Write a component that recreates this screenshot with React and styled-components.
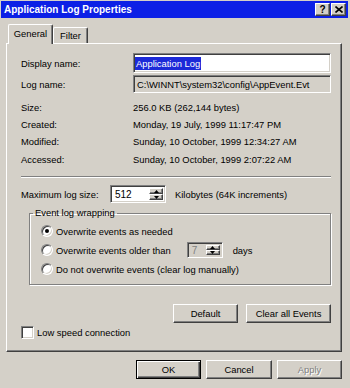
import React from 'react';
import styled, { createGlobalStyle, css } from 'styled-components';

const FACE = '#d4d0c8';
const SHADOW = '#808080';
const DARK = '#404040';

const Global = createGlobalStyle`
  html, body { margin: 0; padding: 0; background: ${FACE}; }
  body { font-family: "Liberation Sans", Arial, sans-serif; font-size: 9.4px; color: #000; }
  * { box-sizing: border-box; }
`;

const raised = css`
  border: 1px solid;
  border-color: #fff ${DARK} ${DARK} #fff;
  box-shadow: inset -1px -1px 0 ${SHADOW};
  background: ${FACE};
`;

const sunken = css`
  border: 1px solid;
  border-color: ${SHADOW} #fff #fff ${SHADOW};
  box-shadow: inset 1px 1px 0 ${DARK}, inset -1px -1px 0 ${FACE};
`;

const Window = styled.div`
  width: 350px;
  height: 388px;
  background: ${FACE};
  padding: 1px 2px 0 1px;
  display: flex;
  flex-direction: column;
  overflow: hidden;
`;

const TitleBar = styled.div`
  height: 17px;
  background: #0c20e6;
  display: flex;
  align-items: center;
  padding: 0 2px 0 3px;
  color: #fff;
  font-weight: bold;
  font-size: 10px;
`;

const Title = styled.span`
  flex: 1;
  white-space: nowrap;
`;

const CaptionButton = styled.div`
  ${raised};
  width: 15px;
  height: 13px;
  display: flex;
  align-items: center;
  justify-content: center;
  color: #000;
  font-size: 10px;
  font-weight: bold;
  & + & { margin-left: 1px; }
`;

const Content = styled.div`
  padding: 6px 6px 0 5px;
  display: flex;
  flex-direction: column;
`;

const TabRow = styled.div`
  display: flex;
  align-items: flex-end;
  height: 19px;
  padding-left: 2px;
`;

const Tab = styled.div`
  position: relative;
  background: ${FACE};
  border: 1px solid;
  border-color: #fff ${DARK} transparent #fff;
  box-shadow: inset -1px 0 0 ${SHADOW};
  border-bottom: none;
  border-radius: 2px 2px 0 0;
  display: flex;
  align-items: center;
  justify-content: center;
  width: ${p => p.$w}px;
  height: ${p => (p.$active ? 20 : 16)}px;
  margin-bottom: ${p => (p.$active ? -1 : 0)}px;
  z-index: ${p => (p.$active ? 1 : 0)};
  padding-bottom: ${p => (p.$active ? 2 : 0)}px;
`;

const Panel = styled.div`
  width: 336px;
  height: 309px;
  border: 1px solid;
  border-color: #fff ${DARK} ${DARK} #fff;
  box-shadow: inset -1px -1px 0 ${SHADOW};
  padding: 9px 10px 0 14px;
  display: flex;
  flex-direction: column;
`;

const FieldRow = styled.div`
  display: grid;
  grid-template-columns: 112px 1fr;
  align-items: center;
  height: ${p => p.$h}px;
  margin-top: ${p => p.$mt || 0}px;
`;

const Field = styled.div`
  ${sunken};
  height: 100%;
  background: ${p => (p.$readonly ? FACE : '#fff')};
  display: flex;
  align-items: center;
  padding-left: ${p => (p.$readonly ? 3 : 1)}px;
  white-space: nowrap;
  overflow: hidden;
`;

const Selected = styled.span`
  background: #1c2ad8;
  color: #fff;
  padding: 1px 1px 1px 1px;
`;

const Separator = styled.div`
  margin-top: 8px;
  height: 2px;
  border-top: 1px solid ${SHADOW};
  border-bottom: 1px solid #fff;
`;

const MaxRow = styled.div`
  display: flex;
  align-items: center;
  height: 18px;
  margin-top: 7px;
`;

const MaxLabel = styled.span`
  width: 89px;
`;

const SpinBox = styled.div`
  ${sunken};
  width: ${p => p.$w}px;
  height: ${p => p.$h}px;
  background: ${p => (p.$disabled ? FACE : '#fff')};
  color: ${p => (p.$disabled ? SHADOW : '#000')};
  display: flex;
  align-items: stretch;
  padding: 2px;
`;

const SpinText = styled.span`
  flex: 1;
  display: flex;
  align-items: center;
  padding-left: 2px;
  font-size: 10px;
`;

const SpinCol = styled.div`
  width: 14px;
  display: flex;
  flex-direction: column;
`;

const SpinBtn = styled.div`
  ${raised};
  flex: 1;
  display: flex;
  align-items: center;
  justify-content: center;
`;

const Units = styled.span`
  margin-left: 9px;
`;

const Group = styled.fieldset`
  margin: 4px 0 0 8px;
  padding: 3px 8px 6px 11px;
  border: 1px solid ${SHADOW};
  box-shadow: 1px 1px 0 #fff, inset 1px 1px 0 #fff;
  display: flex;
  flex-direction: column;
  gap: 1px;
`;

const Legend = styled.legend`
  padding: 0 2px;
  margin-left: -8px;
  line-height: 12px;
`;

const OptionRow = styled.div`
  display: flex;
  align-items: center;
  height: 18px;
`;

const Radio = styled.span`
  ${sunken};
  width: 12px;
  height: 12px;
  border-radius: 50%;
  background: #fff;
  margin-right: 3px;
  display: flex;
  align-items: center;
  justify-content: center;
`;

const Dot = styled.span`
  width: 4px;
  height: 4px;
  border-radius: 50%;
  background: #000;
`;

const Days = styled.span`
  margin-left: 10px;
`;

const InlineSpin = styled.span`
  margin-left: 16px;
  display: flex;
`;

const ButtonRow = styled.div`
  display: flex;
  justify-content: flex-end;
  gap: ${p => p.$gap}px;
  margin-top: ${p => p.$mt}px;
`;

const Button = styled.div`
  ${raised};
  width: ${p => p.$w}px;
  height: 19px;
  display: flex;
  align-items: center;
  justify-content: center;
  color: ${p => (p.$disabled ? SHADOW : '#000')};
  text-shadow: ${p => (p.$disabled ? '1px 1px 0 #fff' : 'none')};
  ${p => p.$default && css`
    border: 1px solid #000;
    box-shadow: inset 1px 1px 0 #fff, inset -1px -1px 0 ${DARK}, inset -2px -2px 0 ${SHADOW};
  `}
`;

const CheckRow = styled.div`
  display: flex;
  align-items: center;
  height: 13px;
  margin-top: 3px;
`;

const CheckBox = styled.span`
  ${sunken};
  width: 13px;
  height: 13px;
  background: #fff;
  margin-right: 3px;
`;

const Arrow = ({ up }) => (
  <svg width="5" height="3" viewBox="0 0 5 3">
    <polygon points={up ? '2.5,0 5,3 0,3' : '0,0 5,0 2.5,3'} fill="#000" />
  </svg>
);

const Spinner = ({ w, h, value, disabled }) => (
  <SpinBox $w={w} $h={h} $disabled={disabled}>
    <SpinText>{value}</SpinText>
    <SpinCol>
      <SpinBtn><Arrow up /></SpinBtn>
      <SpinBtn><Arrow /></SpinBtn>
    </SpinCol>
  </SpinBox>
);

export default function App() {
  return (
    <>
      <Global />
      <Window>
        <TitleBar>
          <Title>Application Log Properties</Title>
          <CaptionButton>?</CaptionButton>
          <CaptionButton>
            <svg width="8" height="7" viewBox="0 0 8 7">
              <path d="M0.5 0.5 L7.5 6.5 M7.5 0.5 L0.5 6.5" stroke="#000" strokeWidth="1.6" />
            </svg>
          </CaptionButton>
        </TitleBar>
        <Content>
          <TabRow>
            <Tab $active $w={45}>General</Tab>
            <Tab $w={35}>Filter</Tab>
          </TabRow>
          <Panel>
            <FieldRow $h={20}>
              <span>Display name:</span>
              <Field><Selected>Application Log</Selected></Field>
            </FieldRow>
            <FieldRow $h={18} $mt={2}>
              <span>Log name:</span>
              <Field $readonly>C:\WINNT\system32\config\AppEvent.Evt</Field>
            </FieldRow>
            <FieldRow $h={17} $mt={6}>
              <span>Size:</span>
              <span>256.0 KB (262,144 bytes)</span>
            </FieldRow>
            <FieldRow $h={17}>
              <span>Created:</span>
              <span>Monday, 19 July, 1999 11:17:47 PM</span>
            </FieldRow>
            <FieldRow $h={17}>
              <span>Modified:</span>
              <span>Sunday, 10 October, 1999 12:34:27 AM</span>
            </FieldRow>
            <FieldRow $h={17} $mt={1}>
              <span>Accessed:</span>
              <span>Sunday, 10 October, 1999 2:07:22 AM</span>
            </FieldRow>
            <Separator />
            <MaxRow>
              <MaxLabel>Maximum log size:</MaxLabel>
              <Spinner w={56} h={18} value="512" />
              <Units>Kilobytes (64K increments)</Units>
            </MaxRow>
            <Group>
              <Legend>Event log wrapping</Legend>
              <OptionRow>
                <Radio><Dot /></Radio>
                Overwrite events as needed
              </OptionRow>
              <OptionRow>
                <Radio />
                Overwrite events older than
                <InlineSpin><Spinner w={36} h={16} value="7" disabled /></InlineSpin>
                <Days>days</Days>
              </OptionRow>
              <OptionRow>
                <Radio />
                Do not overwrite events (clear log manually)
              </OptionRow>
            </Group>
            <ButtonRow $gap={8} $mt={19}>
              <Button $w={65}>Default</Button>
              <Button $w={85}>Clear all Events</Button>
            </ButtonRow>
            <CheckRow>
              <CheckBox />
              Low speed connection
            </CheckRow>
          </Panel>
          <ButtonRow $gap={5} $mt={8}>
            <Button $w={65} $default>OK</Button>
            <Button $w={66}>Cancel</Button>
            <Button $w={65} $disabled>Apply</Button>
          </ButtonRow>
        </Content>
      </Window>
    </>
  );
}
